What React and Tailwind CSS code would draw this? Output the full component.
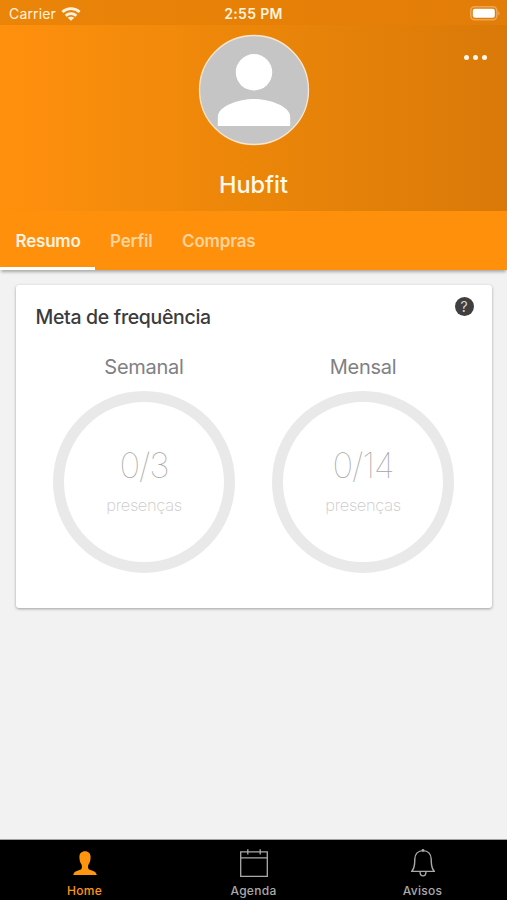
import { useState } from 'react';

const TABS = [
    { id: 'resumo', label: 'Resumo', className: 'px-[15.5px] w-[95px] tracking-[-0.2px]' },
    { id: 'perfil', label: 'Perfil', className: 'pl-[15px] w-[72px] tracking-[-0.15px]' },
    { id: 'compras', label: 'Compras', className: 'pl-[15px] w-[104px] tracking-[-0.15px]' }
];

const GOALS = [
    { id: 'week', title: 'Semanal', value: '0/3' },
    { id: 'month', title: 'Mensal', value: '0/14' }
];

const NAV = [
    { id: 'home', label: 'Home', Icon: PersonIcon },
    { id: 'agenda', label: 'Agenda', Icon: CalendarIcon },
    { id: 'avisos', label: 'Avisos', Icon: BellIcon }
];

function WifiIcon() {
    return (
        <svg width="20" height="14" viewBox="0 0 20 14" fill="none" stroke="currentColor" strokeWidth="2.8">
            <path d="M1.4 5C6.3.5 13.7.5 18.6 5" />
            <path d="M4.7 8.7C7.7 5.9 12.3 5.9 15.3 8.7" />
            <path d="M10 13.8 6.7 10.8C8.6 9.3 11.4 9.3 13.3 10.8Z" fill="currentColor" stroke="none" />
        </svg>
    );
}

function BatteryIcon() {
    return (
        <svg width="31" height="15" viewBox="0 0 31 15" fill="none">
            <rect x="0.8" y="0.8" width="26" height="13" rx="3.8" stroke="#fff" strokeOpacity="0.32" strokeWidth="1.6" />
            <rect x="2.8" y="2.8" width="22" height="9" rx="2" fill="#fff" />
            <path d="M28.3 5.2c1.7.7 1.7 3.5 0 4.2Z" fill="#fff" fillOpacity="0.4" />
        </svg>
    );
}

function Avatar() {
    return (
        <svg width="112" height="112" viewBox="0 0 112 112">
            <circle cx="56" cy="56" r="54.5" fill="#c5c5c5" stroke="#fbe7cf" strokeWidth="1.3" />
            <circle cx="56" cy="38.3" r="18.2" fill="#fff" />
            <path d="M19.8 92V83C19.8 72 41 65 56 65S92.2 72 92.2 83V92Z" fill="#fff" />
        </svg>
    );
}

function PersonIcon() {
    return (
        <svg width="30" height="30" viewBox="0 0 30 30" fill="currentColor">
            <path d="M15 3.2C18.4 3.2 20.6 5.4 20.6 8.8C20.6 12.5 19.9 14.8 18.5 16.6C17.8 17.8 17.9 20.6 18.8 21.3C20.6 22.7 25.9 22.4 26.8 27H3.2C4.1 22.4 9.4 22.7 11.2 21.3C12.1 20.6 12.2 17.8 11.5 16.6C10.1 14.8 9.4 12.5 9.4 8.8C9.4 5.4 11.6 3.2 15 3.2Z" />
        </svg>
    );
}

function CalendarIcon() {
    return (
        <svg width="30" height="30" viewBox="0 0 30 30" fill="none" stroke="currentColor" strokeWidth="1.3">
            <path d="M1.7 3.8H28.3V28.3H1.7ZM1.7 9.8H28.3M8.8 1.2V6.4M21.2 1.2V6.4" />
        </svg>
    );
}

function BellIcon() {
    return (
        <svg width="30" height="30" viewBox="0 0 30 30" fill="none" stroke="currentColor" strokeWidth="1.4">
            <path d="M15 2.6C20 2.6 23 6 23.2 11C23.4 15.5 22.8 19.8 26.4 23.4H3.6C7.2 19.8 6.6 15.5 6.8 11C7 6 10 2.6 15 2.6Z" strokeLinejoin="round" />
            <path d="M12.1 24C12.1 29.2 17.9 29.2 17.9 24" />
            <circle cx="15" cy="2.4" r="1.4" fill="currentColor" stroke="none" />
        </svg>
    );
}

function Goal({ title, value }) {
    return (
        <div className="flex w-[182px] flex-col items-center">
            <h3 className="text-[20px] leading-6 tracking-[-0.25px] text-[#808084]">{title}</h3>
            <div className="mt-3 flex h-[182px] w-[182px] flex-col items-center rounded-full border-[11px] border-[#e9e9e9] pt-[42px]">
                <span className="text-[35px] leading-[42px] font-thin tracking-[-1.2px] text-[#a6a6a6]">{value}</span>
                <span className="mt-[9px] text-[16.5px] leading-5 font-extralight tracking-[-0.35px] text-[#cacaca]">presenças</span>
            </div>
        </div>
    );
}

export default function App() {
    const [tab, setTab] = useState('resumo');
    const [page, setPage] = useState('home');

    return (
        <div className="flex h-[900px] w-[507px] flex-col overflow-hidden bg-[#f2f2f2] font-['Inter',sans-serif] whitespace-nowrap">
            {/* Status bar */}
            <div className="grid h-[25px] shrink-0 grid-cols-3 items-center bg-linear-to-r from-[#eb850a] via-[#e68006] to-[#e27d08] pt-[2px] text-[14px] text-[#fff3df]">
                <div className="flex items-center gap-[5px] pl-[9px]">
                    <span className="tracking-[0.15px]">Carrier</span>
                    <WifiIcon />
                </div>
                <span className="text-center font-semibold tracking-[0.3px]">2:55 PM</span>
                <div className="flex justify-end pr-[6px]">
                    <BatteryIcon />
                </div>
            </div>

            {/* Profile */}
            <header className="relative flex h-[186px] shrink-0 flex-col items-center bg-linear-to-r from-[#ff900d] via-[#eb8609] to-[#d97908] pt-[9px]">
                <Avatar />
                <h1 className="mt-[23px] text-[23.5px] leading-8 font-medium text-[#fffaf0]">Hubfit</h1>
                <button className="absolute top-[30px] right-[20px] flex gap-[4px]">
                    <span className="h-[5px] w-[5px] rounded-full bg-[#fff7ea]" />
                    <span className="h-[5px] w-[5px] rounded-full bg-[#fff7ea]" />
                    <span className="h-[5px] w-[5px] rounded-full bg-[#fff7ea]" />
                </button>
            </header>

            {/* Tabs */}
            <nav className="z-10 flex h-[59px] shrink-0 bg-[#ff900c] shadow-[0_3px_3px_-1px_rgba(0,0,0,0.3)]">
                {TABS.map((t) => (
                    <button
                        key={t.id}
                        onClick={() => setTab(t.id)}
                        className={`border-b-[3px] pt-[5px] text-left text-[17px] font-semibold ${t.className} ${tab === t.id ? 'border-white text-[#fff4e2]' : 'border-transparent text-[#ffd59c]'}`}
                    >
                        {t.label}
                    </button>
                ))}
            </nav>

            <main className="flex-1 px-[15.5px] pt-[15px]">
                <section className="h-[323px] rounded-[3px] bg-white shadow-[0_1px_3px_rgba(0,0,0,0.35)]">
                    <div className="flex items-start justify-between pt-[12px] pr-[18px] pl-[20px]">
                        <h2 className="mt-[6px] text-[19.5px] leading-7 font-medium tracking-[-0.33px] text-[#3b3b3d]">Meta de frequência</h2>
                        <span className="flex h-[19px] w-[19px] items-center justify-center rounded-full bg-[#3f3f3f] text-[14px] leading-none text-[#d6d6d6]">?</span>
                    </div>
                    <div className="mt-[24px] flex justify-center gap-[37px]">
                        {GOALS.map((g) => (
                            <Goal key={g.id} title={g.title} value={g.value} />
                        ))}
                    </div>
                </section>
            </main>

            {/* Bottom navigation */}
            <footer className="grid h-[61px] shrink-0 grid-cols-3 border-t border-[#a0a0a0] bg-black">
                {NAV.map(({ id, label, Icon }) => (
                    <button
                        key={id}
                        onClick={() => setPage(id)}
                        className={`flex flex-col items-center pt-[8px] ${page === id ? 'text-[#ff950f]' : 'text-[#aaaaaa]'}`}
                    >
                        <Icon />
                        <span className="mt-[5px] text-[12px] leading-4 font-medium tracking-[0.3px]">{label}</span>
                    </button>
                ))}
            </footer>
        </div>
    );
}
